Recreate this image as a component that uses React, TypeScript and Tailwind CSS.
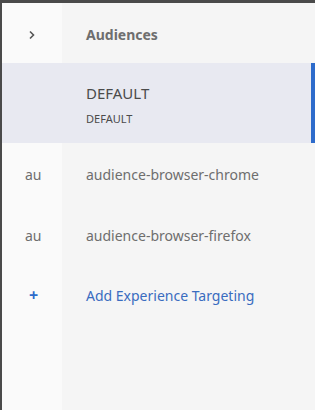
import React from 'react';

const rows = [
  { tag: 'au', label: 'audience-browser-chrome' },
  { tag: 'au', label: 'audience-browser-firefox' },
];

export default function App() {
  return (
    <div
      className="w-[315px] h-[410px] bg-[#4a4a4a] pt-[3px] pl-[2px] flex"
      style={{ fontFamily: '"Noto Sans", "Open Sans", Arial, sans-serif' }}
    >
      <div className="flex-1 flex flex-col bg-[#f5f5f5] bg-[linear-gradient(to_right,#fafafa_0,#fafafa_60px,#f5f5f5_60px)]">
        <div className="h-[60px] flex items-center pt-[3px]">
          <div className="w-[60px] flex justify-center text-[#555]">
            <svg width="10" height="10" viewBox="0 0 10 10" fill="none" stroke="currentColor" strokeWidth="1.6">
              <path d="M3 1.5 L6.5 5 L3 8.5" />
            </svg>
          </div>
          <div className="pl-[24px] text-[14px] font-bold text-[#6e6e6e]">Audiences</div>
        </div>

        <div className="h-[80px] flex bg-[#e8e9f1] border-r-4 border-[#2d6bcb]">
          <div className="w-[60px]" />
          <div className="pl-[24px] flex flex-col justify-center pt-[2px]">
            <div className="text-[15px] text-[#4b4b4b] leading-[20px]">DEFAULT</div>
            <div className="text-[11px] text-[#4b4b4b] leading-[14px] mt-[9px]">DEFAULT</div>
          </div>
        </div>

        {rows.map((r) => (
          <div key={r.label} className="h-[60px] flex items-center mt-[1px] first:mt-0">
            <div className="w-[60px] pl-[23px] text-[14px] text-[#6e6e6e]">{r.tag}</div>
            <div className="pl-[24px] text-[14px] text-[#6e6e6e]">{r.label}</div>
          </div>
        ))}

        <div className="h-[60px] flex items-center">
          <div className="w-[60px] pl-[27px] text-[16px] font-bold text-[#2d6bcb]">+</div>
          <div className="pl-[24px] text-[14px] text-[#3a6cc0]">Add Experience Targeting</div>
        </div>
      </div>
    </div>
  );
}
